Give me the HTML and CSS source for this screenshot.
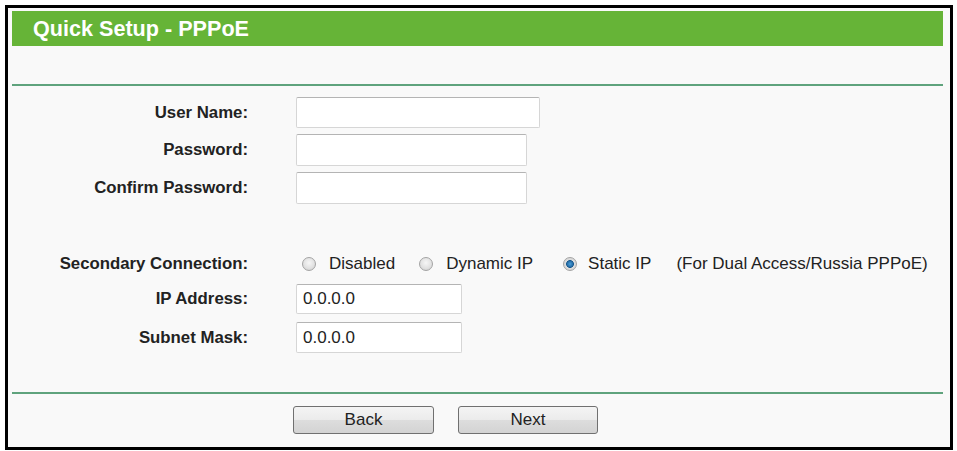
FILE: index.html
```html
<!DOCTYPE html>
<html>
<head>
<meta charset="utf-8">
<link rel="stylesheet" href="styles.css">
</head>
<body>
<div class="frame">
  <div class="header">Quick Setup - PPPoE</div>
  <div class="divider first"></div>
  <div class="row r1">
    <div class="label">User Name:</div>
    <div class="field"><input class="text w-user" type="text"></div>
  </div>
  <div class="row r2">
    <div class="label">Password:</div>
    <div class="field"><input class="text w-pass" type="text"></div>
  </div>
  <div class="row r3">
    <div class="label">Confirm Password:</div>
    <div class="field"><input class="text w-pass" type="text"></div>
  </div>
  <div class="row r4">
    <div class="label">Secondary Connection:</div>
    <div class="field radios">
      <span class="opt o1"><span class="radio"></span><span>Disabled</span></span>
      <span class="opt o2"><span class="radio"></span><span>Dynamic IP</span></span>
      <span class="opt o3"><span class="radio checked"></span><span>Static IP</span></span>
      <span class="note">(For Dual Access/Russia PPPoE)</span>
    </div>
  </div>
  <div class="row r5">
    <div class="label">IP Address:</div>
    <div class="field"><input class="text w-ip" type="text" value="0.0.0.0"></div>
  </div>
  <div class="row r6">
    <div class="label">Subnet Mask:</div>
    <div class="field"><input class="text w-ip" type="text" value="0.0.0.0"></div>
  </div>
  <div class="divider second"></div>
  <div class="buttons">
    <button class="btn back">Back</button>
    <button class="btn next">Next</button>
  </div>
</div>
</body>
</html>
```

FILE: styles.css
```css
html, body {
  margin: 0;
  padding: 0;
  background: #ffffff;
}
body {
  font-family: "Liberation Sans", Arial, sans-serif;
  color: #222;
}
.frame {
  margin: 5px 0 0 5px;
  width: 931px;
  height: 436px;
  border: 3px solid #000;
  background: #f9f9f9;
  padding: 3px 7px 0 4px;
  box-sizing: content-box;
  overflow: hidden;
}
.header {
  height: 35px;
  line-height: 35px;
  background: #66b437;
  color: #fff;
  font-weight: bold;
  font-size: 21.6px;
  padding-left: 21px;
}
.divider {
  height: 2px;
  background: #5fa37d;
}
.divider.first { margin-top: 38px; }
.divider.second { margin-top: 39px; }
.row {
  display: grid;
  grid-template-columns: 236px auto;
  column-gap: 48px;
  align-items: center;
}
.r1 { margin-top: 11px; height: 31px; }
.r2 { margin-top: 6px; height: 32px; }
.r3 { margin-top: 6px; height: 32px; }
.r4 { margin-top: 48px; height: 24px; }
.r5 { margin-top: 8px; height: 30px; }
.r6 { margin-top: 8px; height: 31px; }
.label {
  text-align: right;
  font-weight: bold;
  font-size: 16.8px;
  color: #222;
}
.field {
  display: flex;
  align-items: center;
  height: 100%;
}
.text {
  box-sizing: border-box;
  height: 100%;
  margin: 0;
  border: 1px solid #d6d6d6;
  border-top-color: #b4b4b4;
  border-radius: 2px;
  background: #fff;
  font-family: "Liberation Sans", Arial, sans-serif;
  font-size: 17px;
  color: #222;
  padding: 0 6px;
  outline: none;
}
.w-user { width: 244px; }
.w-pass { width: 231px; }
.w-ip { width: 166px; }
.radios {
  font-size: 17px;
  color: #222;
  padding-left: 6px;
}
.opt {
  display: inline-flex;
  align-items: center;
  gap: 13px;
}
.o2 { margin-left: 24px; }
.o3 { margin-left: 30px; gap: 11px; }
.radio {
  display: inline-block;
  box-sizing: border-box;
  width: 14px;
  height: 14px;
  border-radius: 50%;
  border: 1px solid #a4a4a4;
  background: radial-gradient(circle at 50% 40%, #f6f6f6 0%, #e2e2e2 55%, #cdcdcd 100%);
}
.radio.checked {
  background: radial-gradient(circle, #4aa0dc 0%, #2a73ad 30%, #1b5a8e 42%, #dedede 50%, #d0d0d0 100%);
}
.note { margin-left: 25px; }
.buttons {
  margin-top: 12px;
  height: 28px;
  display: flex;
  gap: 24px;
  padding-left: 281px;
}
.btn {
  box-sizing: border-box;
  height: 28px;
  margin: 0;
  border: 1px solid #707070;
  border-radius: 3px;
  background: linear-gradient(#f4f4f4 0%, #ebebeb 50%, #dddddd 51%, #d3d3d3 100%);
  font-family: "Liberation Sans", Arial, sans-serif;
  font-size: 17px;
  color: #222;
  padding: 0;
}
.back { width: 141px; }
.next { width: 140px; }
```
